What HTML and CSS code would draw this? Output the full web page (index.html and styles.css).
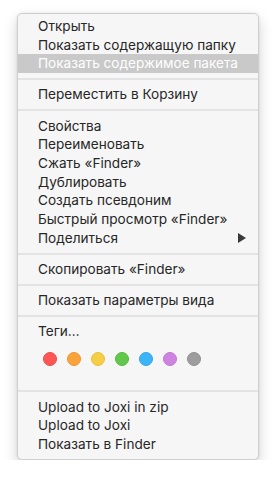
FILE: index.html
```html
<!DOCTYPE html>
<html lang="ru">
<head>
<meta charset="utf-8">
<link rel="stylesheet" href="styles.css">
</head>
<body>
<div class="menu">
  <div class="item">Открыть</div>
  <div class="item">Показать содержащую папку</div>
  <div class="item active">Показать содержимое пакета</div>
  <div class="sep"></div>
  <div class="item">Переместить в Корзину</div>
  <div class="sep"></div>
  <div class="item">Свойства</div>
  <div class="item">Переименовать</div>
  <div class="item">Сжать «Finder»</div>
  <div class="item">Дублировать</div>
  <div class="item">Создать псевдоним</div>
  <div class="item">Быстрый просмотр «Finder»</div>
  <div class="item submenu">Поделиться<span class="arrow"></span></div>
  <div class="sep"></div>
  <div class="item">Скопировать «Finder»</div>
  <div class="sep"></div>
  <div class="item">Показать параметры вида</div>
  <div class="sep"></div>
  <div class="item">Теги…</div>
  <div class="tags">
    <span class="dot red"></span>
    <span class="dot orange"></span>
    <span class="dot yellow"></span>
    <span class="dot green"></span>
    <span class="dot blue"></span>
    <span class="dot purple"></span>
    <span class="dot gray"></span>
  </div>
  <div class="sep"></div>
  <div class="item">Upload to Joxi in zip</div>
  <div class="item">Upload to Joxi</div>
  <div class="item">Показать в Finder</div>
</div>
</body>
</html>
```

FILE: styles.css
```css
html, body {
  margin: 0;
  padding: 0;
  background: #ffffff;
}
body {
  padding: 13px 0 0 17px;
}
.menu {
  box-sizing: border-box;
  width: 242px;
  height: 447px;
  background: #f6f6f6;
  border: 1px solid #cfcfcf;
  border-radius: 5px;
  box-shadow: 0 6px 14px rgba(0, 0, 0, 0.18), 0 0 3px rgba(0, 0, 0, 0.08);
  padding: 3px 0 4px;
  display: flex;
  flex-direction: column;
  font-family: Inter, "Noto Sans", sans-serif;
  font-size: 13.6px;
  color: #262626;
}
.item {
  height: 18.7px;
  line-height: 18.7px;
  padding-left: 20px;
  padding-right: 12px;
  white-space: nowrap;
  display: flex;
  align-items: center;
  justify-content: space-between;
}
.item.active {
  background: #c9c9c9;
  color: #ffffff;
}
.sep {
  height: 12.4px;
  display: flex;
  align-items: center;
}
.sep::before {
  content: "";
  display: block;
  width: 100%;
  height: 2px;
  background: #e3e3e3;
}
.arrow {
  width: 0;
  height: 0;
  border-left: 8px solid #3a3a3a;
  border-top: 5px solid transparent;
  border-bottom: 5px solid transparent;
}
.tags {
  height: 44.6px;
  padding: 11px 0 0 25px;
  box-sizing: border-box;
  display: flex;
  gap: 10px;
}
.dot {
  width: 14px;
  height: 14px;
  border-radius: 50%;
  box-sizing: border-box;
}
.red { background: #fd5655; border: 1px solid #ee4a49; }
.orange { background: #fba33b; border: 1px solid #ef9630; }
.yellow { background: #f6cd46; border: 1px solid #ecbf3a; }
.green { background: #62c84b; border: 1px solid #56ba40; }
.blue { background: #3bb4f8; border: 1px solid #30a6ea; }
.purple { background: #cf83e1; border: 1px solid #c276d5; }
.gray { background: #9d9d9d; border: 1px solid #909090; }
```
